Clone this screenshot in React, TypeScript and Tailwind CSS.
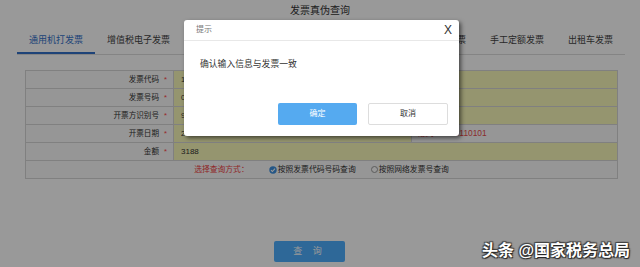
import React from 'react';

const rows = [
  { label: '发票代码', value: '144031900111' },
  { label: '发票号码', value: '03245678' },
  { label: '开票方识别号', value: '91440300MA5DXXXX' },
];

const tabs = [
  { text: '通用机打发票', active: true, w: '' },
  { text: '增值税电子发票', active: false, w: '' },
  { text: '增值税普通发票（卷式）', active: false, w: 'w-[194px]' },
  { text: '机动车销售统一发票', active: false, w: 'w-[105px]' },
  { text: '手工定额发票', active: false, w: '' },
  { text: '出租车发票', active: false, w: '' },
];

const Label = ({ text }: { text: string }) => (
  <div className="w-[148px] h-full flex items-center justify-end pr-[6px] border-r border-[#d5d5d5] bg-[#fafafa] text-[#333]">
    <span>{text}</span>
    <span className="ml-[5px] text-[#ff4444]">*</span>
  </div>
);

// --- the query page behind the mask ---
const QueryPage = () => {
  return (
    <div className="w-full h-full bg-white">
      <div className="h-[20px] flex items-center justify-center text-[10px] text-[#333]">发票真伪查询</div>

      <div className="mt-[10px] mx-[17px] w-[608px] flex border-b border-[#ddd]">
        {tabs.map((t) => (
          <div
            key={t.text}
            className={`h-[24px] px-3 flex items-center justify-center border-b-2 text-[9px] whitespace-nowrap ${t.w} ${
              t.active ? 'border-[#3270c8] text-[#3270c8]' : 'border-transparent text-[#444]'
            }`}
          >
            {t.text}
          </div>
        ))}
      </div>

      <div className="mt-[15px] ml-[25px] w-[593px] border-x border-t border-[#d5d5d5] text-[7.6px]">
        {rows.map((r) => (
          <div key={r.label} className="h-[18px] flex border-b border-[#d5d5d5]">
            <Label text={r.label} />
            <div className="flex-1 h-full flex items-center pl-[7px] bg-[#f8f8ba] text-[#333]">{r.value}</div>
          </div>
        ))}
        <div className="h-[18px] flex border-b border-[#d5d5d5]">
          <Label text="开票日期" />
          <div className="w-[238px] h-full flex items-center pl-[7px] bg-[#f8f8ba] border-r border-[#d5d5d5] text-[#333]">20190110</div>
          <div className="flex-1 h-full flex items-center pl-[5px] bg-[#fafafa] text-[#e84a4a] text-[8.4px]">格式:20180110101</div>
        </div>
        <div className="h-[18px] flex border-b border-[#d5d5d5]">
          <Label text="金额" />
          <div className="flex-1 h-full flex items-center pl-[7px] bg-[#f8f8ba] text-[#333] text-[8px]">3188</div>
        </div>
        <div className="h-[18px] flex items-center justify-center border-b border-[#d5d5d5] bg-[#fafafa]">
          <span className="text-[#f04040] text-[7.8px]">选择查询方式：</span>
          <span className="ml-[20px] flex items-center text-[#333] text-[7.8px]">
            <svg width="8" height="8" viewBox="0 0 8 8" className="mr-[1px]">
              <circle cx="4" cy="4" r="3.7" fill="#3d8fe0" />
              <path d="M2 4.1 L3.4 5.5 L6 2.6" stroke="#fff" strokeWidth="1.1" fill="none" />
            </svg>
            按照发票代码号码查询
          </span>
          <span className="ml-[15px] flex items-center text-[#333] text-[7.8px]">
            <span className="w-[7px] h-[7px] mr-[1px] rounded-full border border-[#999] bg-white" />
            按照网络发票号查询
          </span>
        </div>
      </div>

      <button className="mt-[62px] ml-[274px] w-[71px] h-[21px] rounded-[2px] bg-[#4dadfd] text-white text-[9px] tracking-[4px] flex items-center justify-center">
        查 询
      </button>
    </div>
  );
};

export default function App() {
  return (
    <div className="relative w-[640px] h-[267px] overflow-hidden font-['Liberation_Sans','Noto_Sans_CJK_SC',sans-serif]">
      <QueryPage />

      {/* mask */}
      <div className="absolute inset-0 bg-black/40" />

      {/* confirm dialog */}
      <div className="absolute left-[184px] top-[20px] w-[275px] h-[116px] bg-white rounded-[3px] shadow-[2px_2px_4px_rgba(0,0,0,0.55)] flex flex-col">
        <div className="h-[21px] flex items-center justify-between pl-[12px] pr-[7px] border-b border-[#e8e8e8]">
          <span className="text-[8px] text-[#777]">提示</span>
          <span className="text-[12px] text-[#333] font-['Liberation_Sans',sans-serif]">X</span>
        </div>
        <div className="pt-[16px] pl-[16px] text-[8.8px] text-[#333] leading-[14px]">确认输入信息与发票一致</div>
        <div className="mt-auto mb-[11px] mr-[11px] flex justify-end gap-[11px]">
          <button className="w-[79px] h-[22px] rounded-[2px] bg-[#55aaf0] text-white text-[8px]">确定</button>
          <button className="w-[80px] h-[22px] rounded-[2px] bg-white border border-[#ddd] text-[#333] text-[8px]">取消</button>
        </div>
      </div>

      {/* watermark */}
      <div className="absolute left-[482px] top-[239px] text-[16px] font-bold text-white whitespace-nowrap [text-shadow:1px_1px_1px_#222,-1px_-1px_1px_#444,1px_-1px_1px_#444,-1px_1px_1px_#444]">
        头条 @国家税务总局
      </div>
    </div>
  );
}
